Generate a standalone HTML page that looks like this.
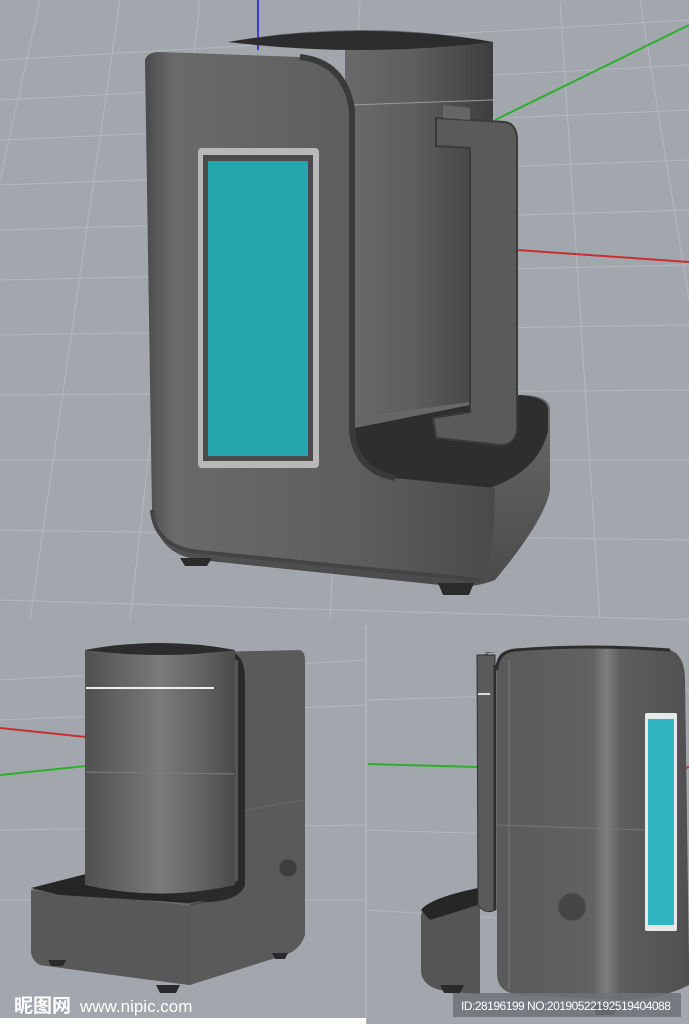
<!DOCTYPE html>
<html><head><meta charset="utf-8"><style>
html,body{margin:0;padding:0;width:689px;height:1024px;overflow:hidden;background:#a2a7ae}
svg{display:block}
</style></head><body>
<svg width="689" height="1024" viewBox="0 0 689 1024" xmlns="http://www.w3.org/2000/svg">
<defs>
<linearGradient id="bodyG" x1="0" x2="1" y1="0" y2="0">
<stop offset="0" stop-color="#4a4a4a"/><stop offset="0.08" stop-color="#6a6a6a"/><stop offset="0.6" stop-color="#5e5e5e"/><stop offset="1" stop-color="#4a4a4a"/></linearGradient>
<linearGradient id="cylG" x1="0" x2="1" y1="0" y2="0">
<stop offset="0" stop-color="#4c4c4c"/><stop offset="0.3" stop-color="#707070"/><stop offset="0.7" stop-color="#5e5e5e"/><stop offset="1" stop-color="#3e3e3e"/></linearGradient>
<linearGradient id="cylG2" x1="0" x2="1" y1="0" y2="0">
<stop offset="0" stop-color="#505050"/><stop offset="0.5" stop-color="#7a7a7a"/><stop offset="0.8" stop-color="#606060"/><stop offset="1" stop-color="#4a4a4a"/></linearGradient>
<linearGradient id="brG" x1="0" x2="1" y1="0" y2="0">
<stop offset="0" stop-color="#5a5a5a"/><stop offset="0.5" stop-color="#626262"/><stop offset="0.57" stop-color="#7e7e7e"/><stop offset="0.64" stop-color="#5e5e5e"/><stop offset="1" stop-color="#505050"/></linearGradient>
<linearGradient id="baseG" x1="0" x2="0" y1="0" y2="1">
<stop offset="0" stop-color="#6a6a6a"/><stop offset="1" stop-color="#4a4a4a"/></linearGradient>
</defs>
<rect width="689" height="1024" fill="#a2a7ae"/>
<g stroke="#b8bcc2" stroke-width="1" fill="none" opacity="0.8">
<path d="M0 60 L689 20 M0 100 L689 65 M0 140 L689 110 M0 185 L689 160 M0 230 L689 210 M0 280 L689 265 M0 335 L689 325 M0 395 L689 390 M0 460 L689 460 M0 530 L689 540 M0 600 L689 620"/>
<path d="M40 0 L0 180 M120 0 L30 620 M200 0 L130 620 M560 0 L600 620 M640 0 L689 300 M360 0 L330 620"/>
<path d="M0 680 L366 660 M0 720 L366 705 M0 830 L366 825 M0 900 L366 900 M368 700 L689 690 M368 830 L689 840 M368 910 L689 930"/>
</g>
<line x1="366" y1="625" x2="366" y2="1024" stroke="#b0b4ba" stroke-width="2"/>
<line x1="258" y1="0" x2="258" y2="50" stroke="#3a3ad0" stroke-width="2"/>
<line x1="495" y1="120" x2="689" y2="25" stroke="#2cb02c" stroke-width="2"/>
<line x1="517" y1="250" x2="689" y2="262" stroke="#c83030" stroke-width="2"/>
<line x1="0" y1="728" x2="86" y2="737" stroke="#c83030" stroke-width="2"/>
<line x1="0" y1="775" x2="86" y2="766" stroke="#2cb02c" stroke-width="2"/>
<line x1="368" y1="764" x2="478" y2="767" stroke="#2cb02c" stroke-width="2"/>
<line x1="680" y1="770" x2="689" y2="767" stroke="#c83030" stroke-width="2"/>

<!-- MAIN OBJECT -->
<path d="M228 42 Q360 18 493 42 L493 455 Q420 470 345 460 L345 45 Z" fill="url(#cylG)"/>
<path d="M228 42 Q360 20 493 42 Q360 58 228 42 Z" fill="#2c2c2c"/>
<line x1="350" y1="105" x2="493" y2="100" stroke="#9a9a9a" stroke-width="1"/>
<path d="M340 420 L520 395 Q550 395 550 410 L550 490 Q545 520 495 580 Q470 590 440 585 L200 560 Q160 555 155 520 L155 470 Z" fill="url(#baseG)"/>
<path d="M345 430 L520 395 Q548 397 548 410 L548 430 Q540 470 490 488 L390 480 Q350 470 345 430 Z" fill="#2e2e2e"/>
<path d="M180 558 l5 8 l22 0 l5 -8 Z M438 583 l5 12 l26 0 l5 -12 Z" fill="#2a2a2a"/>
<path d="M145 60 Q147 52 160 52 L300 57 Q345 62 352 110 L352 430 Q355 470 395 478 L495 488 Q495 560 480 580 L200 552 Q155 548 152 510 Z" fill="url(#bodyG)"/>
<path d="M300 57 Q345 62 352 110 L352 430 Q355 470 395 478" fill="none" stroke="#3a3a3a" stroke-width="6"/>
<path d="M152 510 Q155 548 200 552 L480 580" fill="none" stroke="#444" stroke-width="4"/>
<rect x="198" y="148" width="121" height="320" rx="4" fill="#b8b8b8"/>
<rect x="203" y="155" width="110" height="306" fill="#4a4a4a"/>
<rect x="208" y="161" width="100" height="295" fill="#26a6ae"/>
<path d="M436 118 L505 122 Q517 124 517 140 L517 430 Q515 445 500 445 L436 438 L433 418 L470 412 L470 148 L436 146 Z" fill="#5a5a5a" stroke="#3a3a3a" stroke-width="2"/>
<path d="M443 105 L470 108 L470 120 L443 118 Z" fill="#666"/>

<!-- BOTTOM LEFT -->
<path d="M215 652 L300 650 Q305 652 305 660 L305 935 Q300 950 285 955 L190 985 Q150 980 40 965 Q31 960 31 950 L31 890 L90 873 L215 873 Z" fill="#5a5a5a"/>
<path d="M31 890 L145 900 L190 905 L190 985 Q150 980 40 965 Q31 960 31 950 Z" fill="#585858"/>
<path d="M31 890 L145 900 L190 905" fill="none" stroke="#707070" stroke-width="1"/>
<path d="M190 905 L215 900" stroke="#444"/>
<path d="M31 888 L90 873 L215 873 L215 898 L190 903 L60 895 Z" fill="#262626"/>
<path d="M225 652 Q245 650 245 680 L245 885 Q240 900 210 902 L175 900 L175 885 L215 882 L215 660 Z" fill="#2a2a2a"/>
<path d="M232 660 L238 660 L238 880 L232 885 Z" fill="#555"/>
<path d="M85 650 Q160 636 235 650 L235 885 Q160 902 85 885 Z" fill="url(#cylG2)"/>
<path d="M85 650 Q160 636 235 650 Q160 660 85 650 Z" fill="#2c2c2c"/>
<line x1="86" y1="688" x2="214" y2="688" stroke="#eee" stroke-width="2"/>
<line x1="86" y1="772" x2="234" y2="774" stroke="#7c7c7c" stroke-width="1"/>
<line x1="305" y1="800" x2="245" y2="810" stroke="#6a6a6a" stroke-width="1"/>
<circle cx="288" cy="868" r="9" fill="#3e3e3e" stroke="#555"/>
<path d="M48 960 l3 6 l12 0 l3 -6 Z M156 985 l4 8 l16 0 l4 -8 Z M272 953 l3 6 l10 0 l3 -6 Z" fill="#2a2a2a"/>

<!-- BOTTOM RIGHT -->
<path d="M421 915 Q425 900 460 893 L480 890 L480 995 L440 990 Q421 985 421 970 Z" fill="#555"/>
<path d="M421 910 Q430 898 478 888 L478 905 L430 920 Z" fill="#262626"/>
<path d="M477 662 Q478 652 500 652 L485 652 L495 660 L495 905 Q488 915 478 905 Z" fill="#555"/>
<path d="M477 655 L495 655 L495 910 Q485 915 478 905 Z" fill="#5a5a5a" stroke="#333" stroke-width="1"/>
<line x1="478" y1="694" x2="490" y2="694" stroke="#ddd" stroke-width="2"/>
<path d="M505 652 Q560 645 670 650 Q685 655 685 680 L689 960 L689 985 Q660 1000 620 1000 L520 995 Q498 993 497 975 L497 670 Q497 652 505 652 Z" fill="url(#brG)"/>
<path d="M497 670 Q497 652 515 650 Q590 644 670 650" fill="none" stroke="#2e2e2e" stroke-width="3"/>
<path d="M495 665 L495 910" stroke="#2e2e2e" stroke-width="3"/>
<line x1="497" y1="825" x2="645" y2="830" stroke="#777" stroke-width="1"/>
<line x1="509" y1="660" x2="509" y2="990" stroke="#777" stroke-width="1"/>
<rect x="645" y="713" width="32" height="218" rx="2" fill="#e8e8e8"/>
<rect x="648" y="719" width="26" height="206" fill="#2fb6c0"/>
<circle cx="572" cy="907" r="14" fill="#454545" stroke="#5a5a5a"/>
<path d="M440 985 l4 8 l16 0 l4 -8 Z M592 1005 l4 10 l18 0 l4 -10 Z" fill="#2a2a2a"/>

<!-- footer -->
<rect x="0" y="1018" width="366" height="6" fill="#ffffff"/>
<text x="14" y="1012" font-family="'Liberation Sans','Noto Sans CJK SC',sans-serif" font-size="19" font-weight="bold" fill="#ffffff">昵图网</text>
<text x="80" y="1012" font-family="'Liberation Sans',sans-serif" font-size="17" fill="#ffffff">www.nipic.com</text>
<rect x="453" y="993" width="228" height="24" fill="#6e7278" opacity="0.85"/>
<text x="461" y="1010" font-family="'Liberation Sans',sans-serif" font-size="12" fill="#ffffff" letter-spacing="-0.5">ID:28196199 NO:20190522192519404088</text>
</svg>
</body></html>
